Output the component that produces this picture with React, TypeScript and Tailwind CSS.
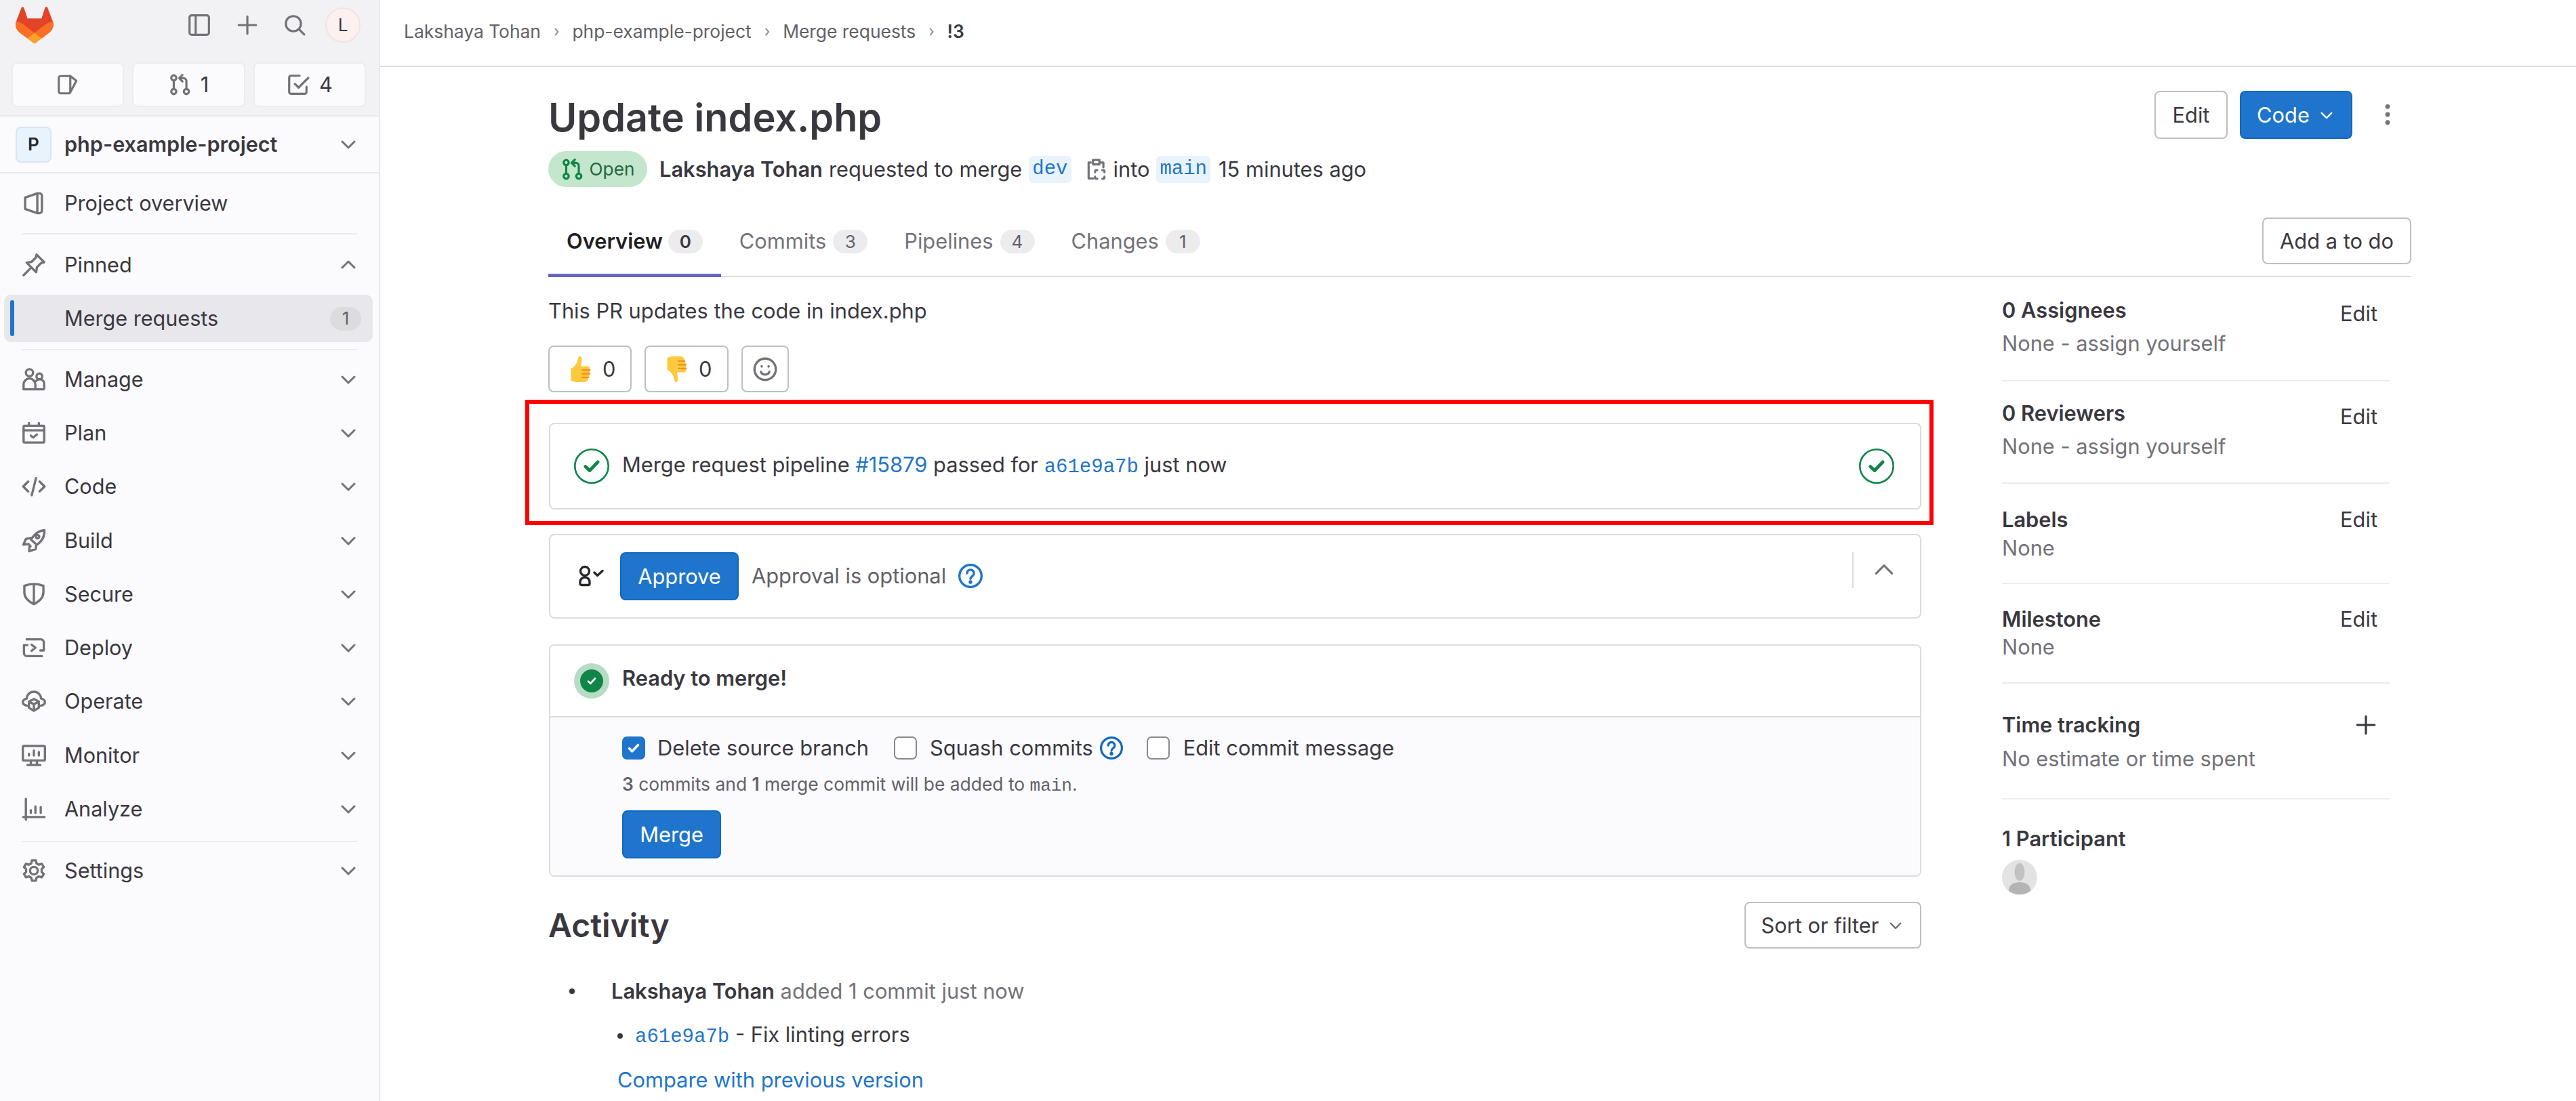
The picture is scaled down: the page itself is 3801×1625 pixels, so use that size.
import type { ReactNode } from "react";

const Icon = ({ className, children }: { className: string; children: ReactNode }) => (
  <svg
    viewBox="0 0 16 16"
    fill="none"
    stroke="currentColor"
    strokeWidth={1.5}
    strokeLinecap="round"
    strokeLinejoin="round"
    className={className}
  >
    {children}
  </svg>
);

const Chevron = ({ className }: { className: string }) => (
  <Icon className={className}>
    <path d="M3.5 6 8 10.5 12.5 6" />
  </Icon>
);

const MergeIcon = ({ className }: { className: string }) => (
  <Icon className={className}>
    <circle cx="3.5" cy="3.25" r="1.75" />
    <circle cx="3.5" cy="12.75" r="1.75" />
    <circle cx="12.25" cy="12.75" r="1.75" />
    <path d="M3.5 5v6M12.25 11V5.5a2 2 0 0 0-2-2H7.5M9.5 1.25 7.25 3.5 9.5 5.75" />
  </Icon>
);

const HelpIcon = ({ className }: { className: string }) => (
  <svg viewBox="0 0 16 16" fill="none" stroke="currentColor" strokeWidth={1.5} strokeLinecap="round" className={className}>
    <circle cx="8" cy="8" r="7.25" />
    <path d="M5.75 6.2a2.25 2.25 0 1 1 3.6 1.8c-.8.6-1.35 1-1.35 1.9" />
    <circle cx="8" cy="12" r=".5" fill="currentColor" />
  </svg>
);

const StatusCheck = ({ className }: { className: string }) => (
  <svg viewBox="0 0 16 16" fill="none" className={className}>
    <circle cx="8" cy="8" r="7.6" stroke="#108548" strokeWidth={0.8} />
    <path d="M5.2 8.2 7.1 10l3.7-3.9" stroke="#108548" strokeWidth={1.5} strokeLinecap="round" strokeLinejoin="round" />
  </svg>
);

const Thumb = ({ down }: { down?: boolean }) => (
  <svg viewBox="0 0 36 36" className="size-[40px]">
    <g transform={down ? "matrix(1 0 0 -1 0 36)" : undefined}>
      <path
        d="M5 17c3-1 6-4 8-8 1-2 1-7 3-8 3-1 4 3 3 7-.5 2-1 4-1 6h9c3 0 4 3 2 5 2 2 1 4 0 5 1 2 0 4-1 5 0 3-2 6-5 6H13c-4 0-8-2-8-2z"
        fill="#FFC83D"
      />
      <path d="M20 19h10M20 24h10M20 29h8" stroke="#F19020" strokeWidth={2} strokeLinecap="round" />
    </g>
  </svg>
);

const navIcons: Record<string, ReactNode> = {
  Manage: (
    <>
      <circle cx="5.1" cy="3.6" r="2.35" />
      <circle cx="11.6" cy="6" r="1.9" />
      <path d="M1.25 14.5v-3.25a3.85 3.85 0 0 1 7.7 0v3.25zM9.5 8.9a3 3 0 0 1 5.25 2.1v2.5a1 1 0 0 1-1 1H9" />
    </>
  ),
  Plan: (
    <>
      <rect x="1.25" y="3.25" width="13.5" height="11" rx=".75" />
      <path d="M4.75 1.5v1.75M11.25 1.5v1.75M1.5 6.25h13M6 9.75l1.5 1.25L10 9" />
    </>
  ),
  Code: <path d="M4.25 4.75 1 8l3.25 3.25M11.75 4.75 15 8l-3.25 3.25M9.4 2.5 6.6 13.75" />,
  Build: (
    <>
      <path d="M14.9 1.1c.2 4-1.7 7.4-5 9.6L6.1 7.3C8 4 11 1.4 14.9 1.1z" />
      <circle cx="10.4" cy="5.4" r="1.1" />
      <path d="M6.6 6.2 2.8 6.8 1.1 10.6l3.5-.4M9.6 10.7l-.4 2.8-4.3 1.4.2-3.2M4.6 10.2l1.2 1.5" />
    </>
  ),
  Secure: <path d="M8 1.25c2.25 0 4.5.5 6.25 1.25v4.25c0 3.25-2.25 5.75-6.25 7.75-4-2-6.25-4.5-6.25-7.75V2.5C3.5 1.75 5.75 1.25 8 1.25zM8 1.25v13" />,
  Deploy: (
    <path d="M1.5 6.25v5.25a2 2 0 0 0 2 2h9.75M14.5 9.75V4.5a2 2 0 0 0-2-2H3.25M6.5 6l2.5 2-2.5 2M1.5 6.25h2.25M14.5 9.75h-2.25" />
  ),
  Operate: (
    <>
      <path d="M3.6 10.9C1.75 10.5.75 9.5.75 8.5c0-1 1-2 2.5-2.25C3.5 3.5 5.5 1.75 8 1.75s4.5 1.75 4.75 4.5c1.5.25 2.5 1.25 2.5 2.25s-1 2-2.85 2.4" />
      <path d="m8 6.5 3.25 1.75v4L8 14.25 4.75 12.25v-4zM4.75 8.25 8 10l3.25-1.75M8 10v4.25" />
    </>
  ),
  Monitor: (
    <>
      <rect x=".75" y="1.75" width="14.5" height="9.5" rx=".75" />
      <path d="M6 11.5v2.25M10 11.5v2.25M3.75 14.25h8.5M4.75 7v1M8 4.75V8M11.25 5.75V8" />
    </>
  ),
  Analyze: <path d="M2.75 1.25V15M1 13.25h14M6 8.75v1.75M9 6.25v4.25M12.5 6.75v3.75" />,
  Settings: (
    <>
      <circle cx="8" cy="8" r="2.5" />
      <path d="M6.7 1.3h2.6l.4 1.9 1.6.9 1.9-.6 1.3 2.2-1.4 1.3v1.9l1.4 1.3-1.3 2.2-1.9-.6-1.6.9-.4 1.9H6.7l-.4-1.9-1.6-.9-1.9.6-1.3-2.2 1.4-1.3V7L1.5 5.7l1.3-2.2 1.9.6 1.6-.9z" />
    </>
  ),
};

const nav = ["Manage", "Plan", "Code", "Build", "Secure", "Deploy", "Operate", "Monitor", "Analyze"];

const NavRow = ({ label }: { label: string }) => (
  <div className="flex h-[79.3px] items-center">
    <Icon className="ml-[32px] size-[36px] shrink-0 text-[#737278]">{navIcons[label]}</Icon>
    <span className="ml-[27px] flex-1 text-[#3a383f]">{label}</span>
    <Chevron className="mr-[29px] size-[32px] text-[#737278]" />
  </div>
);

const Sidebar = () => (
  <aside className="flex h-full w-[561px] shrink-0 flex-col border-r-2 border-[#e9e8ec] bg-[#fbfafd] text-[30.6px]">
    <div className="h-[172px] border-b-2 border-[#e9e8ec] bg-[#f2f1f4]">
      <div className="flex h-[74px] items-center pl-[23px]">
        <svg viewBox="0 0 25 24" className="h-[54px] w-[56px] shrink-0">
          <path d="m24.507 9.5-.034-.09L21.082.562a.896.896 0 0 0-1.694.091l-2.29 7.01H7.825L5.535.653a.898.898 0 0 0-1.694-.09L.451 9.411.416 9.5a6.297 6.297 0 0 0 2.09 7.278l.012.01.03.022 5.16 3.867 2.56 1.935 1.554 1.176a1.051 1.051 0 0 0 1.268 0l1.555-1.176 2.56-1.935 5.197-3.89.014-.01A6.297 6.297 0 0 0 24.507 9.5Z" fill="#E24329" />
          <path d="m24.507 9.5-.034-.09a11.44 11.44 0 0 0-4.56 2.051l-7.447 5.632 4.742 3.584 5.197-3.89.014-.01A6.297 6.297 0 0 0 24.507 9.5Z" fill="#FC6D26" />
          <path d="m7.707 20.677 2.56 1.935 1.555 1.176a1.051 1.051 0 0 0 1.268 0l1.555-1.176 2.56-1.935-4.743-3.584-4.755 3.584Z" fill="#FCA326" />
          <path d="M5.01 11.461a11.43 11.43 0 0 0-4.56-2.05L.416 9.5a6.297 6.297 0 0 0 2.09 7.278l.012.01.03.022 5.16 3.867 4.745-3.584-7.444-5.632Z" fill="#FC6D26" />
        </svg>
        <Icon className="ml-[198px] size-[34px] text-[#737278]">
          <rect x="1.25" y="1.25" width="13.5" height="13.5" rx="1.5" />
          <path d="M5.5 1.5v13" />
        </Icon>
        <Icon className="ml-[37px] size-[34px] text-[#737278]">
          <path d="M8 2v12M2 8h12" />
        </Icon>
        <Icon className="ml-[36px] size-[34px] text-[#737278]">
          <circle cx="7" cy="7" r="5.25" />
          <path d="m11 11 3.5 3.5" />
        </Icon>
        <div className="ml-[28px] flex size-[52px] items-center justify-center rounded-full border-2 border-[#f0e4e2] bg-[#fcf1ef] text-[26px] text-[#3a383f]">
          L
        </div>
      </div>
      <div className="mt-[18px] flex gap-[12px] pl-[17px]">
        <div className="flex h-[66px] w-[166px] items-center justify-center rounded-[8px] border-2 border-[#ececef] bg-[#fbfafd] text-[#737278]">
          <Icon className="size-[34px]">
            <path d="M9.5 2H3a1.25 1.25 0 0 0-1.25 1.25v9.5A1.25 1.25 0 0 0 3 14h5.5a1.5 1.5 0 0 0 1.4-1L14 5.25 9.75 2v11" />
          </Icon>
        </div>
        <div className="flex h-[66px] w-[167px] items-center justify-center gap-[13px] rounded-[8px] border-2 border-[#ececef] bg-[#fbfafd] text-[#3a383f]">
          <MergeIcon className="size-[34px] text-[#737278]" />1
        </div>
        <div className="flex h-[66px] w-[166px] items-center justify-center gap-[14px] rounded-[8px] border-2 border-[#ececef] bg-[#fbfafd] text-[#3a383f]">
          <Icon className="size-[34px] text-[#737278]">
            <path d="M9 1.75H3A1.25 1.25 0 0 0 1.75 3v10A1.25 1.25 0 0 0 3 14.25h9.5A1.25 1.25 0 0 0 13.75 13V9.5M5.75 7.5 8.25 10 15 3.25" />
          </Icon>
          4
        </div>
      </div>
    </div>
    <div className="flex h-[84px] items-center border-b-2 border-[#e9e8ec] pl-[23px]">
      <div className="flex size-[53px] items-center justify-center rounded-[8px] border-2 border-[#d7e6f5] bg-[#e9f3fc] text-[26px] font-semibold text-[#28272d]">
        P
      </div>
      <span className="ml-[19px] flex-1 font-semibold text-[#3a383f]">php-example-project</span>
      <Chevron className="mr-[29px] size-[32px] text-[#737278]" />
    </div>
    <div className="flex h-[88px] items-center">
      <Icon className="ml-[32px] size-[36px] text-[#737278]">
        <path d="M2.25 4.25 10.25 1.5h1.5a1.5 1.5 0 0 1 1.5 1.5v10a1.5 1.5 0 0 1-1.5 1.5h-1.5l-8-2.75zM10.25 1.5v13" />
      </Icon>
      <span className="ml-[27px] text-[#3a383f]">Project overview</span>
    </div>
    <div className="mx-[32px] h-[2px] bg-[#ececef]" />
    <div className="flex h-[89px] items-center">
      <Icon className="ml-[32px] size-[36px] text-[#737278]">
        <path d="m9.75 1.25 5 5-2 .5-2.75 2.75-.5 3.25-6.25-6.25L6.5 6l2.75-2.75zM5.5 10.5l-4.25 4.25" />
      </Icon>
      <span className="ml-[27px] flex-1 text-[#3a383f]">Pinned</span>
      <Icon className="mr-[29px] size-[32px] text-[#737278]">
        <path d="M3.5 10 8 5.5l4.5 4.5" />
      </Icon>
    </div>
    <div className="relative mx-[6px] flex h-[70px] w-[544px] items-center rounded-[10px] bg-[#e8e7ec]">
      <div className="absolute left-[9px] top-[8px] h-[53px] w-[6px] rounded-full bg-[#1f75cb]" />
      <span className="ml-[89px] flex-1 text-[#3a383f]">Merge requests</span>
      <span className="mr-[17px] flex h-[35px] w-[46px] items-center justify-center rounded-full bg-[#dcdcde] text-[26px] text-[#626168]">
        1
      </span>
    </div>
    <div className="mx-[32px] mt-[10px] h-[2px] bg-[#ececef]" />
    <div className="pt-[3px]">
      {nav.map((label) => (
        <NavRow key={label} label={label} />
      ))}
    </div>
    <div className="mx-[32px] mt-[7px] h-[2px] bg-[#ececef]" />
    <div className="mt-[3px]">
      <NavRow label="Settings" />
    </div>
  </aside>
);

const Breadcrumbs = () => (
  <header className="flex h-[99px] items-center border-b-2 border-[#dcdcde] pb-[6px] pl-[35px] text-[26.4px] text-[#626168]">
    {["Lakshaya Tohan", "php-example-project", "Merge requests"].map((crumb) => (
      <span key={crumb} className="flex items-center">
        {crumb}
        <span className="mx-[19px] text-[22px] text-[#89888d]">›</span>
      </span>
    ))}
    <span className="font-semibold text-[#3a383f]">!3</span>
  </header>
);

const tabs = [
  { label: "Overview", count: 0, active: true },
  { label: "Commits", count: 3, active: false },
  { label: "Pipelines", count: 4, active: false },
  { label: "Changes", count: 1, active: false },
];

const Tabs = () => (
  <div className="mt-[24px] flex h-[109px] items-start justify-between border-b-2 border-[#dcdcde]">
    <div className="flex">
      {tabs.map((tab) =>
        tab.active ? (
          <div key={tab.label} className="flex h-[109px] items-start gap-[8px] border-b-[5px] border-[#6666c4] px-[27px] pt-[34px] font-semibold text-[#1f1e24]">
            {tab.label}
            <span className="mt-[5px] flex h-[35px] w-[51px] items-center justify-center rounded-full bg-[#ececef] text-[26px] text-[#3a383f]">{tab.count}</span>
          </div>
        ) : (
          <div key={tab.label} className="flex h-[109px] items-start gap-[10px] px-[27px] pt-[34px] text-[#737278]">
            {tab.label}
            <span className="mt-[5px] flex h-[35px] w-[51px] items-center justify-center rounded-full bg-[#ececef] text-[26px] text-[#626168]">{tab.count}</span>
          </div>
        ),
      )}
    </div>
    <button className="mt-[21px] h-[69px] w-[220px] rounded-[8px] border-2 border-[#bfbfc3] text-[#3a383f]">Add a to do</button>
  </div>
);

const Card = ({ children, className }: { children: ReactNode; className: string }) => (
  <div className={`relative rounded-[8px] border-2 border-[#dcdcde] ${className}`}>{children}</div>
);

const Checkbox = ({ checked, className }: { checked?: boolean; className?: string }) =>
  checked ? (
    <span className={`flex size-[34px] shrink-0 items-center justify-center rounded-[7px] bg-[#1f75cb] ${className ?? ""}`}>
      <svg viewBox="0 0 16 16" className="size-[26px]" fill="none" stroke="white" strokeWidth={2.2} strokeLinecap="round" strokeLinejoin="round">
        <path d="m4 8.5 2.6 2.5L12 5.2" />
      </svg>
    </span>
  ) : (
    <span className={`block size-[34px] shrink-0 rounded-[7px] border-2 border-[#89888d] bg-white ${className ?? ""}`} />
  );

const MainColumn = () => (
  <div className="w-[2026px] shrink-0 text-[#3a383f]">
    <p className="mt-[28px] h-[44px]">This PR updates the code in index.php</p>
    <div className="mt-[29px] flex gap-[19px]">
      <button className="flex h-[69px] w-[123px] items-center gap-[12px] rounded-[8px] border-2 border-[#bfbfc3] pl-[26px]">
        <Thumb />0
      </button>
      <button className="flex h-[69px] w-[124px] items-center gap-[12px] rounded-[8px] border-2 border-[#bfbfc3] pl-[26px]">
        <Thumb down />0
      </button>
      <button className="flex h-[69px] w-[70px] items-center justify-center rounded-[8px] border-2 border-[#bfbfc3] text-[#737278]">
        <Icon className="size-[36px]">
          <circle cx="8" cy="8" r="7" />
          <path d="M5.25 9.75C5.75 11 6.75 11.5 8 11.5s2.25-.5 2.75-1.75M5.75 6v.25M10.25 6v.25" />
        </Icon>
      </button>
    </div>

    <Card className="ml-[1px] mt-[45px] flex h-[128px] items-center">
      <StatusCheck className="ml-[35px] size-[52px] shrink-0" />
      <span className="ml-[19px] flex-1">
        Merge request pipeline <span className="text-[#1f75cb]">#15879</span> passed for{" "}
        <span className="font-['Liberation_Mono',monospace] text-[29px] text-[#1f75cb]">a61e9a7b</span> just now
      </span>
      <StatusCheck className="mr-[38px] size-[52px] shrink-0" />
      {/* red annotation box from the original screenshot */}
      <div className="pointer-events-none absolute -bottom-[25px] -left-[37px] -right-[20px] -top-[36px] border-[6px] border-[#ff0000]" />
    </Card>

    <Card className="ml-[1px] mt-[36px] flex h-[125px] items-start pt-[25px]">
      <svg viewBox="0 0 37 32" className="ml-[42px] mt-[19px] h-[32px] w-[37px] shrink-0" fill="none" stroke="#28272d" strokeWidth={3.4} strokeLinecap="round" strokeLinejoin="round">
        <circle cx="9" cy="9" r="6.5" />
        <path d="M2 27.5V25a7 7 0 0 1 14 0v2.5a2 2 0 0 1-2 2H4a2 2 0 0 1-2-2zM23 11l4.5 4.5L35 8.5" />
      </svg>
      <button className="ml-[24px] h-[71px] w-[175px] rounded-[8px] border-2 border-[#1068bf] bg-[#1f75cb] text-white">Approve</button>
      <span className="ml-[19px] mt-[13px] text-[#626168]">Approval is optional</span>
      <HelpIcon className="ml-[18px] mt-[17px] size-[36px] text-[#1f75cb]" />
      <div className="ml-auto mr-[98px] h-[53px] w-[2px] bg-[#dcdcde]" />
      <Icon className="absolute right-[36px] top-[34px] size-[34px] text-[#737278]">
        <path d="M2.5 10.5 8 5l5.5 5.5" />
      </Icon>
    </Card>

    <Card className="ml-[1px] mt-[38px] h-[343px] overflow-hidden">
      <div className="flex h-[106px] items-center border-b-2 border-[#dcdcde] bg-white">
        <div className="ml-[35px] flex size-[52px] items-center justify-center rounded-full bg-[#b6dcc4]">
          <span className="flex size-[34px] items-center justify-center rounded-full bg-[#108548]">
            <svg viewBox="0 0 16 16" className="size-[20px]" fill="none" stroke="white" strokeWidth={2.2} strokeLinecap="round" strokeLinejoin="round">
              <path d="m4 8.5 2.6 2.5L12 5.2" />
            </svg>
          </span>
        </div>
        <span className="mb-[8px] ml-[19px] font-semibold">Ready to merge!</span>
      </div>
      <div className="h-full bg-[#fbfafd] pl-[106px] pt-[23px]">
        <div className="flex h-[44px] items-center">
          <Checkbox checked />
          <span className="ml-[18px]">Delete source branch</span>
          <Checkbox className="ml-[37px]" />
          <span className="ml-[19px]">Squash commits</span>
          <HelpIcon className="ml-[10px] size-[34px] text-[#1068bf]" />
          <Checkbox className="ml-[35px]" />
          <span className="ml-[20px]">Edit commit message</span>
        </div>
        <p className="mt-[13px] h-[36px] text-[26.4px] leading-[36px] text-[#626168]">
          <b className="font-semibold">3</b> commits and <b className="font-semibold">1</b> merge commit will be added to{" "}
          <span className="font-['Liberation_Mono',monospace] text-[26px]">main</span>.
        </p>
        <button className="mt-[21px] h-[71px] w-[146px] rounded-[8px] border-2 border-[#1068bf] bg-[#1f75cb] text-white">Merge</button>
      </div>
    </Card>

    <div className="mt-[37px] flex h-[69px] items-center justify-between">
      <h2 className="text-[48px] font-semibold leading-[60px] text-[#3a383f]">Activity</h2>
      <button className="flex h-[69px] w-[261px] items-center justify-center gap-[12px] rounded-[8px] border-2 border-[#bfbfc3]">
        Sort or filter
        <Chevron className="size-[26px] text-[#737278]" />
      </button>
    </div>
    <div className="mt-[41px] flex h-[44px] items-center">
      <span className="ml-[29px] flex size-[12px] items-center justify-center rounded-full bg-[#ececef]">
        <span className="size-[8px] rounded-full bg-[#3a383f]" />
      </span>
      <span className="ml-[52px] text-[#737278]">
        <b className="font-semibold text-[#3a383f]">Lakshaya Tohan</b> added 1 commit just now
      </span>
    </div>
    <div className="ml-[102px] mt-[22px] flex h-[44px] items-center">
      <span className="size-[8px] rounded-full bg-[#3a383f]" />
      <span className="ml-[18px]">
        <span className="font-['Liberation_Mono',monospace] text-[29px] text-[#1f75cb]">a61e9a7b</span> - Fix linting errors
      </span>
    </div>
    <p className="ml-[102px] mt-[21px] h-[44px] text-[#1f75cb]">Compare with previous version</p>
  </div>
);

const sections = [
  { title: "0 Assignees", sub: "None - assign yourself", action: "Edit", box: "pt-[27px] pb-[32px]", subBox: "mt-[5px]", editBox: "mt-[5px]" },
  { title: "0 Reviewers", sub: "None - assign yourself", action: "Edit", box: "pt-[25px] pb-[31px]", subBox: "mt-[5px]", editBox: "mt-[5px]" },
  { title: "Labels", sub: "None", action: "Edit", box: "pt-[31px] pb-[29px]", subBox: "-mt-[2px]", editBox: "mt-0" },
  { title: "Milestone", sub: "None", action: "Edit", box: "pt-[30px] pb-[30px]", subBox: "-mt-[3px]", editBox: "mt-0" },
  { title: "Time tracking", sub: "No estimate or time spent", action: "+", box: "pt-[39px] pb-[36px]", subBox: "mt-[6px]", editBox: "mt-0" },
];

const RightColumn = () => (
  <div className="ml-[119px] w-[572px] shrink-0 text-[#3a383f]">
    {sections.map((section) => (
      <div key={section.title} className={`border-b-2 border-[#ececef] ${section.box}`}>
        <div className="flex h-[44px] justify-between">
          <span className="font-semibold">{section.title}</span>
          {section.action === "+" ? (
            <Icon className="mr-[18px] mt-[5px] size-[34px] text-[#3a383f]">
              <path d="M8 2v12M2 8h12" />
            </Icon>
          ) : (
            <span className={`mr-[18px] ${section.editBox}`}>{section.action}</span>
          )}
        </div>
        <p className={`h-[44px] text-[#737278] ${section.subBox}`}>{section.sub}</p>
      </div>
    ))}
    <p className="mt-[36px] h-[44px] font-semibold">1 Participant</p>
    <svg viewBox="0 0 52 52" className="mt-[9px] size-[52px]">
      <circle cx="26" cy="26" r="26" fill="#e3e3e4" />
      <ellipse cx="26" cy="18" rx="7.5" ry="13" fill="#c2c2c4" />
      <path d="M10 46c0-10 8-13 16-13s16 3 16 13c-4 3-10 5-16 5s-12-2-16-5z" fill="#b4b4b6" />
    </svg>
  </div>
);

export default function App() {
  return (
    <div className="flex h-[1625px] w-[3801px] overflow-hidden bg-white font-['Inter',sans-serif] text-[30.8px] leading-[44px]">
      <Sidebar />
      <main className="min-w-0 flex-1">
        <Breadcrumbs />
        <div className="pl-[248px] pr-[243px]">
          <div className="flex items-start justify-between">
            <div>
              <h1 className="mt-[33px] text-[57.5px] font-semibold leading-[82px] text-[#3a383f]">Update index.php</h1>
              <div className="mt-[9px] flex h-[53px] items-center text-[#3a383f]">
                <span className="flex h-[53px] w-[146px] items-center justify-center gap-[8px] rounded-full bg-[#c3e6cd] text-[26.2px] text-[#24663b]">
                  <MergeIcon className="size-[34px] text-[#108548]" />
                  Open
                </span>
                <b className="ml-[18px] font-semibold">Lakshaya Tohan</b>
                <span className="ml-[9px]">requested to merge</span>
                <span className="ml-[10px] rounded-[6px] bg-[#e9f3fc] px-[5px] font-['Liberation_Mono',monospace] text-[29px] leading-[40px] text-[#1f75cb]">dev</span>
                <Icon className="ml-[20px] size-[34px] text-[#737278]">
                  <path d="M4 3.25H2.5v11h3.25M5.5 1.5h4.5V4.5H5.5zM10 3.25h2.75v3.25M7 10v-.5a1 1 0 0 1 1-1h.5M12 8.5h.5a1 1 0 0 1 1 1v.5M13.5 13v.5a1 1 0 0 1-1 1H12M8.5 14.5H8a1 1 0 0 1-1-1V13" />
                </Icon>
                <span className="ml-[8px]">into</span>
                <span className="ml-[10px] rounded-[6px] bg-[#e9f3fc] px-[5px] font-['Liberation_Mono',monospace] text-[29px] leading-[40px] text-[#1f75cb]">main</span>
                <span className="ml-[12px]">15 minutes ago</span>
              </div>
            </div>
            <div className="mt-[35px] flex items-start">
              <button className="h-[71px] w-[108px] rounded-[8px] border-2 border-[#bfbfc3] text-[#3a383f]">Edit</button>
              <button className="ml-[18px] flex h-[71px] w-[166px] items-center justify-center gap-[12px] rounded-[8px] border-2 border-[#1068bf] bg-[#1f75cb] text-white">
                Code
                <Chevron className="size-[26px]" />
              </button>
              <svg viewBox="0 0 16 16" className="ml-[35px] mr-[18px] mt-[18px] size-[34px] text-[#737278]" fill="currentColor">
                <circle cx="8" cy="2.5" r="1.6" />
                <circle cx="8" cy="8" r="1.6" />
                <circle cx="8" cy="13.5" r="1.6" />
              </svg>
            </div>
          </div>
          <Tabs />
          <div className="flex">
            <MainColumn />
            <RightColumn />
          </div>
        </div>
      </main>
    </div>
  );
}
